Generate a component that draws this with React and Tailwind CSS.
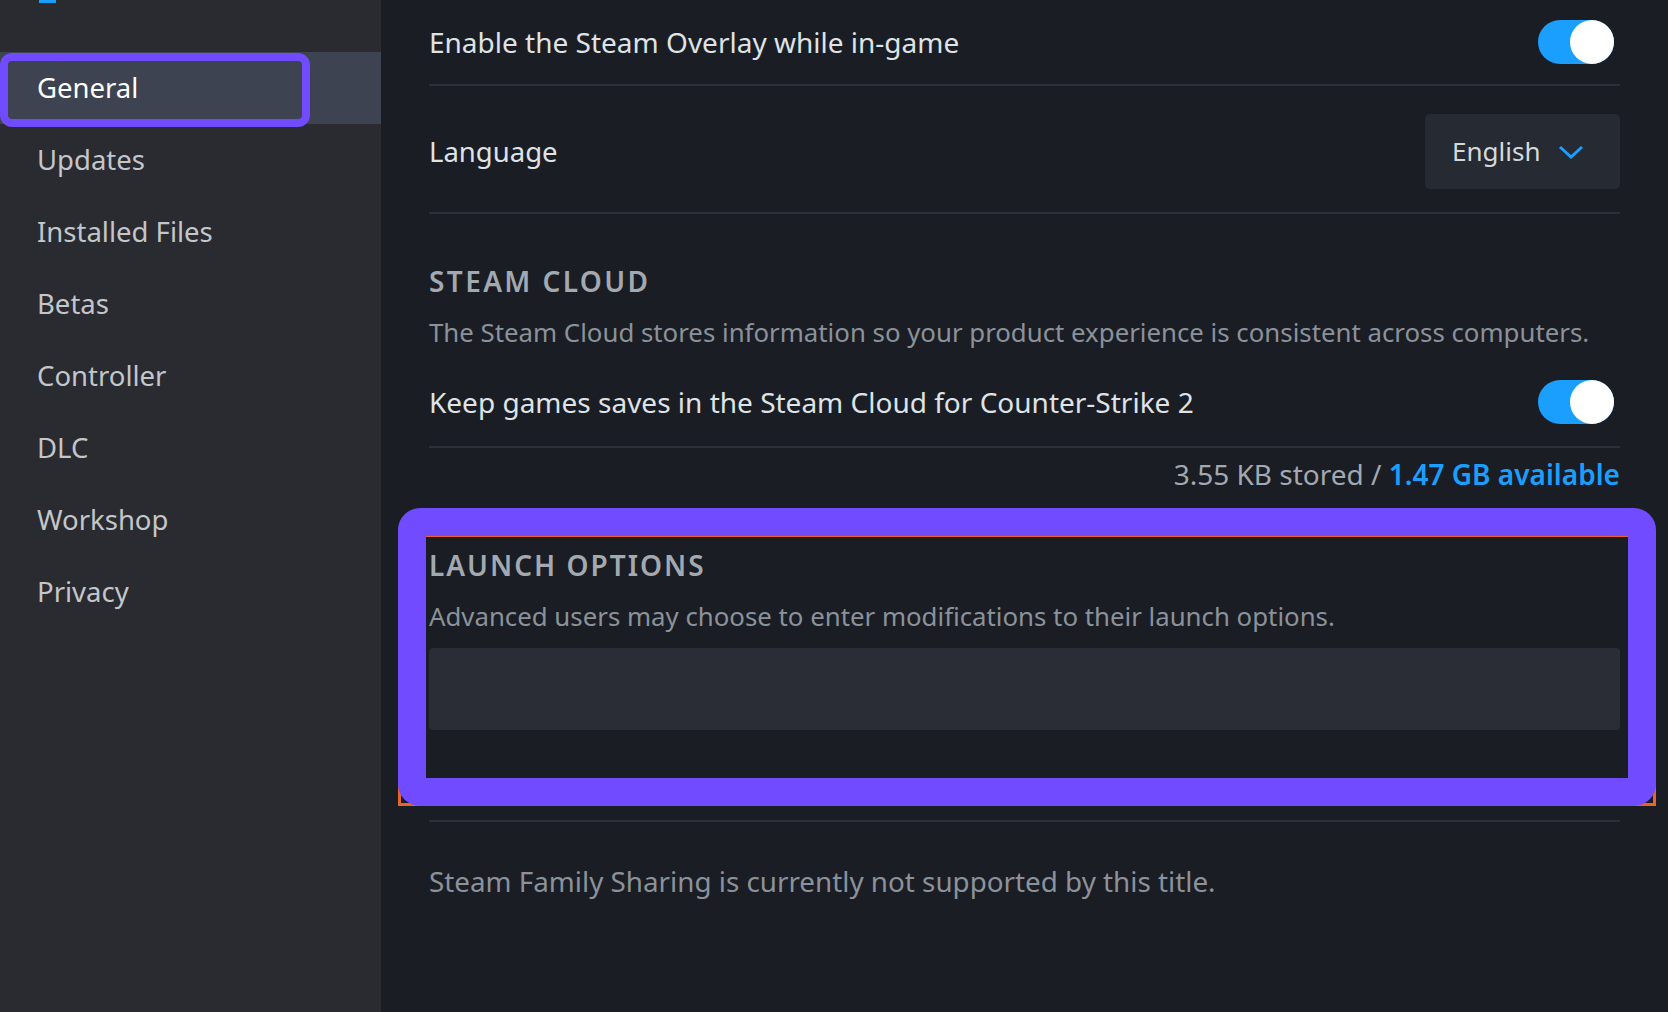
import React from 'react';

const NAV = ['General', 'Updates', 'Installed Files', 'Betas', 'Controller', 'DLC', 'Workshop', 'Privacy'];

const Toggle = () => (
  <div className="w-[76px] h-[44px] rounded-full bg-[#1a9fff] flex items-center justify-end">
    <div className="w-[44px] h-[44px] rounded-full bg-white" />
  </div>
);

const App = () => {
  return (
    <div
      className="w-[1668px] h-[1012px] flex overflow-hidden bg-[#1a1d24]"
      style={{ fontFamily: '"Noto Sans", "Open Sans", sans-serif' }}
    >
      {/* sidebar */}
      <div className="relative w-[381px] shrink-0 bg-[#2a2b30] flex flex-col">
        <div className="h-[52px] pl-[39px]">
          <div className="w-[17px] h-[3px] bg-[#1a9fff]" />
        </div>
        {NAV.map((item, i) => (
          <div
            key={item}
            className={
              i === 0
                ? 'h-[72px] flex items-center pl-[37px] bg-[#3d4350] text-[27.5px] text-white'
                : 'h-[72px] flex items-center pl-[37px] text-[27.5px] text-[#c3c6ca]'
            }
          >
            {item}
          </div>
        ))}
        {/* highlight around General */}
        <div className="absolute left-0 top-[53px] w-[310px] h-[74px] border-[8px] border-[#704bff] rounded-[12px]" />
      </div>

      {/* main */}
      <div className="relative flex-1 px-[48px] text-[#dfe3e6]">
        <div className="h-[86px] flex items-center justify-between border-b-2 border-[#2c3038]">
          <span className="text-[28px]">Enable the Steam Overlay while in-game</span>
          <div className="mr-[6px]">
            <Toggle />
          </div>
        </div>

        <div className="h-[128px] pt-[5px] flex items-center justify-between border-b-2 border-[#2c3038]">
          <span className="text-[27.5px]">Language</span>
          <div className="w-[195px] h-[75px] rounded-[5px] bg-[#262a32] flex items-center pl-[27px] gap-[18px]">
            <span className="text-[26px] text-[#d6d9dc]">English</span>
            <svg width="26" height="16" viewBox="0 0 26 16" fill="none">
              <polyline points="2,3 13,13 24,3" stroke="#1a9fff" strokeWidth="3" />
            </svg>
          </div>
        </div>

        <div className="mt-[51px] text-[28px] leading-[32px] font-semibold tracking-[2.4px] text-[#a3a9b0]">
          STEAM CLOUD
        </div>
        <div className="mt-[19px] text-[25.8px] leading-[32px] text-[#8b929a]">
          The Steam Cloud stores information so your product experience is consistent across computers.
        </div>
        <div className="mt-[10px] h-[90px] flex items-center justify-between border-b-2 border-[#2c3038]">
          <span className="text-[28px]">Keep games saves in the Steam Cloud for Counter-Strike 2</span>
          <div className="mr-[6px]">
            <Toggle />
          </div>
        </div>
        <div className="mt-[10px] text-right text-[28px] leading-[32px] text-[#a3a9b0]">
          3.55 KB stored / <span className="text-[#1a9fff] font-semibold">1.47 GB available</span>
        </div>

        <div className="mt-[59px] text-[28px] leading-[32px] font-semibold tracking-[2px] text-[#a3a9b0]">
          LAUNCH OPTIONS
        </div>
        <div className="mt-[19px] text-[25.8px] leading-[32px] text-[#8b929a]">
          Advanced users may choose to enter modifications to their launch options.
        </div>
        <div className="mt-[16px] h-[82px] rounded-[4px] bg-[#2a2d35]" />
        <div className="mt-[90px] border-b-2 border-[#2c3038]" />
        <div className="mt-[43px] text-[27.8px] leading-[32px] text-[#8b929a]">
          Steam Family Sharing is currently not supported by this title.
        </div>

        {/* highlight around launch options */}
        <div className="absolute left-[17px] top-[534px] w-[1258px] h-[272px] border-[3px] border-[#e8642c]" />
        <div className="absolute left-[17px] top-[508px] w-[1258px] h-[298px] border-[28px] border-[#704bff] rounded-[22px]" />
      </div>
    </div>
  );
};

export default App;
